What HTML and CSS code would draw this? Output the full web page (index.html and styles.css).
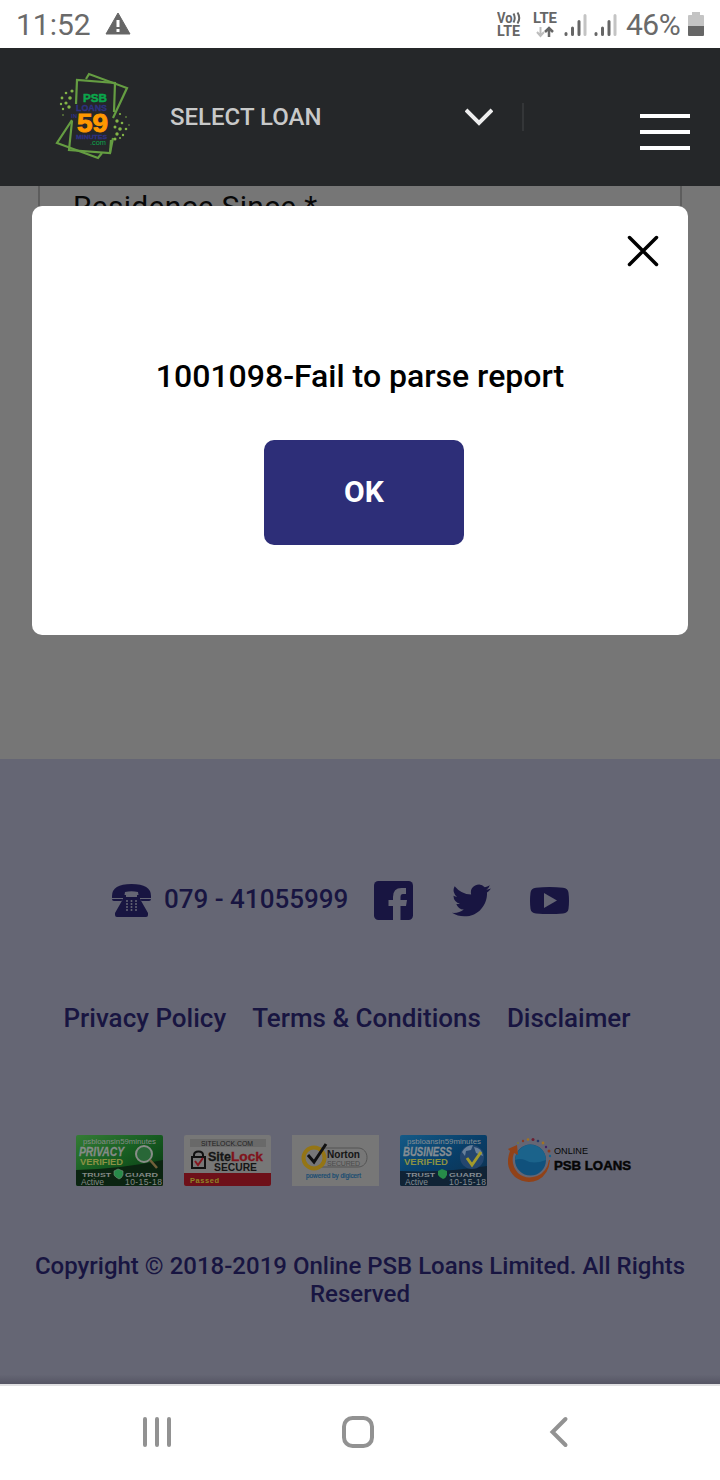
FILE: index.html
```html
<!DOCTYPE html>
<html lang="en">
<head>
<meta charset="utf-8">
<meta name="viewport" content="width=720">
<title>PSB Loans in 59 Minutes</title>
<link rel="stylesheet" href="styles.css">
</head>
<body>
<div class="status">
  <span class="time">11:52</span>
  <svg class="warn" width="26" height="23" viewBox="0 0 26 23"><path d="M13 1 25 22H1Z" fill="#666" stroke="#666" stroke-linejoin="round"/><path d="M13 8v7M13 17v3" stroke="#fff" stroke-width="3"/></svg>
  <svg class="signals" width="120" height="30" viewBox="0 0 120 30">
    <g fill="#666" font-family="Roboto, sans-serif" font-weight="700">
      <text x="0" y="13" font-size="14" textLength="15.500" lengthAdjust="spacingAndGlyphs">Vo</text>
      <text x="0" y="26" font-size="14" textLength="23" lengthAdjust="spacingAndGlyphs">LTE</text>
      <text x="36" y="13" font-size="14" textLength="24" lengthAdjust="spacingAndGlyphs">LTE</text>
    </g>
    <g fill="none" stroke="#666" stroke-width="2"><path d="M16.500 3.500q2.500 4.500 0 9M20.500 2.500q3.500 5.500 0 11"/><path d="M52 27V18M48 22l4-4 4 4" stroke-width="2.500"/><path d="M43.500 17v9M40 22l3.500 4 3.500-4" stroke="#bdbdbd" stroke-width="2"/></g>
    <g stroke-width="3" stroke-linecap="round" stroke="#666"><path d="M69 23.500v1M75.500 18v6.500M82 11.500v13M99 23.500v1M105.500 18v6.500M112 11.500v13"/><path d="M88 5.500v19M118 5.500v19" stroke="#c4c4c4"/></g>
  </svg>
  <span class="percent">46%</span>
  <svg class="battery" width="16" height="24" viewBox="0 0 16 24"><path d="M4 0h8v3h3q1 0 1 1v10H0V4q0-1 1-1h3Z" fill="#c4c4c4"/><path d="M0 14h16v9q0 1-1 1H1q-1 0-1-1Z" fill="#666"/></svg>
</div>

<header class="header">
  <svg class="logo" width="110" height="110" viewBox="0 0 110 110">
    <g fill="none" stroke="#659d42" stroke-width="2.200">
      <path d="M36 44 37 20 75 23 74 52M73 78 70 93 29 90 32 61"/>
      <path d="M71 80 70 93"/>
      <path d="m46 19 3-5 38 14-14 30M32 60 17 83l41 15 4-5"/>
    </g>
    <g fill="#83b547"><circle cx="32" cy="31" r="1.600"/><circle cx="26" cy="33" r="1.300"/><circle cx="30" cy="38" r="1.800"/><circle cx="22" cy="38" r="1.400"/><circle cx="26" cy="43" r="1.600"/><circle cx="21" cy="44" r="1.200"/><circle cx="29" cy="47" r="1.700"/><circle cx="23" cy="49" r="1.200"/><circle cx="23" cy="55" r=".8"/>
    <circle cx="80" cy="54" r="1.100"/><circle cx="86" cy="57" r=".8"/><circle cx="77" cy="61" r="1.700"/><circle cx="82" cy="63" r="1.300"/><circle cx="75" cy="67" r="1.500"/><circle cx="80" cy="69" r="1.800"/><circle cx="86" cy="69" r="1.300"/><circle cx="77" cy="74" r="1.700"/><circle cx="83" cy="75" r="1.200"/><circle cx="75" cy="79" r="1.500"/><circle cx="80" cy="78" r="1"/><circle cx="89" cy="65" r=".7"/></g>
    <g font-family="Liberation Sans, sans-serif" font-weight="700">
      <text x="43" y="42" font-size="11" fill="#0ba64b" stroke="#0ba64b" stroke-width=".5" textLength="24" lengthAdjust="spacingAndGlyphs">PSB</text>
      <text x="36" y="50.500" font-size="8.500" fill="#2e3181" stroke="#2e3181" stroke-width=".3" textLength="31" lengthAdjust="spacingAndGlyphs">LOANS</text>
      <text x="31" y="57.500" font-size="6" fill="#2e3181" textLength="6" lengthAdjust="spacingAndGlyphs">IN</text>
      <text x="37" y="72" font-size="25" fill="#ff9800" stroke="#ff9800" stroke-width=".9" textLength="31" lengthAdjust="spacingAndGlyphs">59</text>
      <text x="36" y="78.500" font-size="6" fill="#2e3181" stroke="#2e3181" stroke-width=".3" textLength="31" lengthAdjust="spacingAndGlyphs">MINUTES</text>
      <text x="50" y="85" font-size="8" font-weight="400" fill="#0ba64b" textLength="16" lengthAdjust="spacingAndGlyphs">.com</text>
    </g>
  </svg>
  <div class="select">
    <span>SELECT LOAN</span>
    <svg width="28" height="20" viewBox="0 0 28 20"><path d="m1 3 13 13L27 3" fill="none" stroke="#eee" stroke-width="4"/></svg>
  </div>
  <div class="burger"><i></i><i></i><i></i></div>
</header>

<main class="page"><div class="form-box"><span class="field-label">Residence Since *</span></div></main>

<footer class="footer">
  <div class="contact">
    <svg width="39" height="33" viewBox="0 0 39 33"><path fill="#181541" d="M0 12Q0 0 19.500 0T39 12v2H27l-1-6q-6.500-1.500-13 0l-1 6H0Z"/><path fill="#181541" d="M0 15h11q-.5 2-2 2H2q-2 0-2-2ZM28 15h11q0 2-2 2h-7q-1.500 0-2-2Z"/><path fill="#181541" d="M11 11h3v2h11v-2h3v4l8 14v2q0 2-2 2H5q-2 0-2-2v-2l8-14Z"/><g fill="#656674"><circle cx="15" cy="17" r="1"/><circle cx="19.500" cy="17" r="1"/><circle cx="24" cy="17" r="1"/><circle cx="15" cy="20" r="1"/><circle cx="19.500" cy="20" r="1"/><circle cx="24" cy="20" r="1"/><circle cx="15" cy="23" r="1"/><circle cx="19.500" cy="23" r="1"/><circle cx="24" cy="23" r="1"/><circle cx="15" cy="26" r="1"/><circle cx="19.500" cy="26" r="1"/><circle cx="24" cy="26" r="1"/></g></svg>
    <span class="phone">079 - 41055999</span>
    <svg class="facebook" width="39" height="39" viewBox="0 0 39 39"><rect width="39" height="39" rx="4.500" fill="#181541"/><path fill="#656674" d="M19 39V25h-4.500v-6H19v-3q0-9 8.500-9H32v6h-3q-2.500 0-2.500 3v3H33l-1 6h-5.500v14Z"/></svg>
    <svg class="twitter" width="39" height="39" viewBox="0 0 24 24"><path fill="#181541" d="M23.950 4.570a10 10 0 0 1-2.820.77 4.960 4.960 0 0 0 2.160-2.720 9.900 9.900 0 0 1-3.130 1.190 4.920 4.920 0 0 0-8.380 4.480A13.960 13.960 0 0 1 1.640 3.160a4.930 4.930 0 0 0 1.520 6.570 4.900 4.900 0 0 1-2.230-.61v.06a4.920 4.920 0 0 0 3.950 4.830 5 5 0 0 1-2.210.08 4.940 4.940 0 0 0 4.600 3.420A9.870 9.870 0 0 1 0 19.540a13.990 13.990 0 0 0 7.550 2.210c9.050 0 14-7.500 14-13.980 0-.21 0-.42-.02-.63a9.940 9.940 0 0 0 2.420-2.570Z"/></svg>
    <svg width="39" height="27" viewBox="0 0 39 27"><path fill="#181541" d="M6 .7q13.500-1.400 27 0 5 .3 5.500 5 1 8 0 16-.5 4.300-5.500 4.700-13.500 1.200-27 0-5-.4-5.500-4.700-1-8 0-16 .5-4.700 5.500-5Z"/><path d="m14 6 13 7.500L14 21Z" fill="#656674"/></svg>
  </div>
  <nav class="links"><a>Privacy Policy</a><a>Terms &amp; Conditions</a><a>Disclaimer</a></nav>
  <div class="seals">
    <svg width="87" height="52" viewBox="0 0 87 52">
      <defs><linearGradient id="green" x2="1" y2="1"><stop offset="0" stop-color="#347c35"/><stop offset=".45" stop-color="#175e22"/><stop offset="1" stop-color="#07310f"/></linearGradient><linearGradient id="blue" x2="1" y2="1"><stop stop-color="#145a87"/><stop offset=".5" stop-color="#083e68"/><stop offset="1" stop-color="#102f4b"/></linearGradient></defs>
      <rect width="87" height="51" rx="2" fill="url(#green)"/><path d="M0 35q45-1 87-10v24q0 2-2 2H2q-2 0-2-2Z" fill="#0b2411"/>
      <circle cx="68" cy="19" r="8" fill="#286737" stroke="#888d88" stroke-width="2"/><path d="m74 25 7 8" stroke="#71603a" stroke-width="2.500"/>
      <g fill="#858b87" font-family="Liberation Sans, sans-serif"><text x="7" y="9" font-size="8" textLength="73" lengthAdjust="spacingAndGlyphs">psbloansin59minutes</text><text x="3" y="20.500" font-size="13" font-weight="700" font-style="italic" stroke="#858b87" stroke-width=".3" textLength="45" lengthAdjust="spacingAndGlyphs">PRIVACY</text><text x="4" y="30" font-size="9" font-weight="700" fill="#8b9144" textLength="43" lengthAdjust="spacingAndGlyphs">VERIFIED</text><text x="6" y="41.500" font-size="6" font-weight="700" textLength="29" lengthAdjust="spacingAndGlyphs">TRUST</text><text x="49" y="41.500" font-size="6" font-weight="700" textLength="33" lengthAdjust="spacingAndGlyphs">GUARD</text><text x="5" y="49.500" font-size="8.500" textLength="23">Active</text><text x="49" y="49.500" font-size="8.500" textLength="37">10-15-18</text></g><path d="m38 36 4-2 5 2v4q-1 3-4 4-4-2-5-4Z" fill="#278b49" stroke="#768b79" stroke-width=".6"/>
    </svg>
    <svg width="87" height="52" viewBox="0 0 87 52"><rect width="87" height="51" rx="2" fill="#777"/><path d="M6 4h76v8H6Z" fill="#696969"/><path d="M0 38h87v11q0 2-2 2H2q-2 0-2-2Z" fill="#6e1019"/><path d="M10 22v-2q0-3.500 4.500-3.500T19 20v2" fill="none" stroke="#111" stroke-width="2"/><rect x="8" y="22" width="13" height="11" fill="#777" stroke="#111" stroke-width="2"/><path d="m11 26 3 4 5-7" fill="none" stroke="#86151e" stroke-width="2"/><g font-family="Liberation Sans, sans-serif" font-weight="700"><text x="17" y="10.500" font-size="7" font-weight="400" fill="#222" textLength="52" lengthAdjust="spacingAndGlyphs">SITELOCK.COM</text><text x="24" y="26" font-size="12" fill="#151515" stroke="#151515" stroke-width=".3" textLength="23" lengthAdjust="spacingAndGlyphs">Site</text><text x="47" y="26" font-size="12" fill="#80131c" stroke="#80131c" stroke-width=".3" textLength="32" lengthAdjust="spacingAndGlyphs">Lock</text><text x="30" y="36" font-size="10" fill="#151515" textLength="43" lengthAdjust="spacingAndGlyphs">SECURE</text><text x="6" y="48" font-size="7.500" fill="#8e8525" textLength="29">Passed</text></g></svg>
    <svg width="87" height="52" viewBox="0 0 87 52"><rect width="87" height="51" fill="#777"/><path d="M24 13h42c12 0 12 19 0 19H24" fill="none" stroke="#555"/><circle cx="22" cy="23" r="10.500" fill="#777" stroke="#947515" stroke-width="4"/><path d="m16 20 6 7L34 9" fill="none" stroke="#111" stroke-width="3"/><g font-family="Liberation Sans, sans-serif"><text x="35" y="23" font-size="10" font-weight="700" fill="#151515" textLength="33" lengthAdjust="spacingAndGlyphs">Norton</text><text x="35" y="31" font-size="7" fill="#4b4b4b" textLength="33">SECURED</text><text x="14" y="43" font-size="6.500" fill="#164b73" stroke="#164b73" stroke-width=".2" textLength="55" lengthAdjust="spacingAndGlyphs">powered by digicert</text></g></svg>
    <svg width="87" height="52" viewBox="0 0 87 52"><rect width="87" height="51" rx="2" fill="url(#blue)"/><path d="M0 36q45 2 87-5v18q0 2-2 2H2q-2 0-2-2Z" fill="#102335"/><circle cx="72" cy="22" r="12" fill="#24466e"/><path d="M62 17q4-7 11-7l-2 5-5 1-1 5ZM74 12q8 1 9 9l-7-3Z" fill="#68809a"/><path d="m67 23 5 7 9-13" fill="none" stroke="#a29a2b" stroke-width="3"/><g fill="#858d93" font-family="Liberation Sans, sans-serif"><text x="7" y="9" font-size="8" textLength="74" lengthAdjust="spacingAndGlyphs">psbloansin59minutes</text><text x="3" y="20.500" font-size="13" font-weight="700" font-style="italic" stroke="#858d93" stroke-width=".3" textLength="49" lengthAdjust="spacingAndGlyphs">BUSINESS</text><text x="4" y="30" font-size="9" font-weight="700" fill="#8b9144" textLength="44" lengthAdjust="spacingAndGlyphs">VERIFIED</text><text x="6" y="41.500" font-size="6" font-weight="700" textLength="29" lengthAdjust="spacingAndGlyphs">TRUST</text><text x="49" y="41.500" font-size="6" font-weight="700" textLength="33" lengthAdjust="spacingAndGlyphs">GUARD</text><text x="5" y="49.500" font-size="8.500" textLength="23">Active</text><text x="49" y="49.500" font-size="8.500" textLength="37">10-15-18</text></g><path d="m38 36 4-2 5 2v4q-1 3-4 4-4-2-5-4Z" fill="#278b49"/></svg>
    <svg width="124" height="52" viewBox="0 0 124 52"><circle cx="22.500" cy="25" r="15.500" fill="#10517c"/><path d="M7 25q2-14 15-15.500 15 1.500 16 15.500-13 5-21 0-5-2-10 0Z" fill="#1b638b"/><path d="M2 16q-6 16 5 26 11 8 23 3 11-6 12-20h-1q-2 12-12 16-11 4-19-3-8-9-4-20l4 2-1-10-9 4Z" fill="#914218"/><g fill="#8b3a20"><circle cx="15" cy="6" r="1.200"/><circle cx="20" cy="4.500" r="1.300" fill="#a27321"/><circle cx="25" cy="4.500" r="1.500" fill="#6c1f31"/><circle cx="30" cy="6" r="1.300" fill="#23396b"/><circle cx="35" cy="8" r="1.400" fill="#a27321"/><circle cx="38" cy="12" r="1.200" fill="#452365"/><circle cx="41" cy="16" r="1.500"/><circle cx="42" cy="21" r="1.200" fill="#17658e"/><circle cx="10" cy="8" r="1" fill="#7a7a34"/></g><g fill="#060606" font-family="Liberation Sans, sans-serif"><text x="46" y="19" font-size="9" textLength="34" lengthAdjust="spacingAndGlyphs">ONLINE</text><text x="46" y="35" font-size="13" font-weight="700" stroke="#060606" stroke-width=".5" textLength="77" lengthAdjust="spacingAndGlyphs">PSB LOANS</text></g></svg>
  </div>
  <p class="copyright">Copyright © 2018-2019 Online PSB Loans Limited. All Rights<br>Reserved</p>
</footer>

<div class="navbar">
  <svg width="30" height="32" viewBox="0 0 30 32"><path d="M3 3v26M15 3v26M27 3v26" stroke="#929292" stroke-width="4" stroke-linecap="round"/></svg>
  <svg class="home" width="34" height="34" viewBox="0 0 34 34"><rect x="3" y="3" width="28" height="28" rx="8.500" fill="none" stroke="#929292" stroke-width="4"/></svg>
  <svg class="back" width="20" height="32" viewBox="0 0 20 32"><path d="M16.500 3 3.500 16l13 13" fill="none" stroke="#929292" stroke-width="4" stroke-linecap="round"/></svg>
</div>

<div class="modal" role="dialog">
  <svg class="close" width="32" height="32" viewBox="0 0 32 32"><path d="m2.500 2.500 27 27M29.500 2.500l-27 27" stroke="#000" stroke-width="3.500" stroke-linecap="round"/></svg>
  <p class="message">1001098-Fail to parse report</p>
  <button class="ok">OK</button>
</div>
</body>
</html>
```
FILE: styles.css
```css
* { box-sizing: border-box; }
body { margin: 0; width: 720px; height: 1480px; position: relative; overflow: hidden; font-family: Roboto, sans-serif; background: #767676; }
svg { display: block; flex: none; }
p { margin: 0; }

.status { height: 48px; background: #fff; color: #6a6a6a; display: flex; align-items: flex-start; padding: 0 16px; }
.time { font-size: 30px; line-height: 50px; width: 75px; white-space: nowrap; font-weight: 400; }
.warn { margin: 12px 0 0 14px; }
.signals { margin: 10px 0 0 366px; }
.percent { font-size: 30px; line-height: 50px; width: 56px; margin-left: 9px; letter-spacing: -.5px; white-space: nowrap; }
.battery { margin: 12px 0 0 6px; }

.header { height: 138px; background: #252729; display: flex; align-items: flex-start; padding-right: 30px; }
.logo { margin: 12px 0 0 40px; }
.select { width: 354px; height: 28px; margin: 55px 0 0 20px; padding-right: 29px; border-right: 2px solid #343638; display: flex; align-items: center; justify-content: space-between; color: #c8c9c9; font-size: 24px; font-weight: 500; }
.burger { margin: 66px 0 0 auto; width: 50px; display: grid; gap: 12px; }
.burger i { height: 4px; background: #fff; }

.page { height: 573px; background: #767676; padding: 0 38px; }
.form-box { height: 300px; border: solid #5d5d5d; border-width: 0 2px; padding: 3px 33px; }
.field-label { font-size: 30px; line-height: 36px; color: #080808; letter-spacing: .3px; }

.footer { height: 625px; background: linear-gradient(transparent 98.500%, #555564), #656674; color: #181541; font-weight: 500; }
.contact { display: flex; align-items: center; padding: 122px 0 0 112px; height: 161px; }
.phone { width: 184px; margin: 0 0 4px 13px; font-size: 26px; white-space: nowrap; }
.facebook { margin-left: 26px; }
.twitter { margin: 0 39px; }
.links { display: flex; gap: 26px; padding: 83px 0 0 63.500px; font-size: 26px; line-height: 30px; white-space: nowrap; }
.seals { display: flex; gap: 21px; padding: 102px 0 0 76px; }
.copyright { margin-top: 65px; font-size: 24px; line-height: 28px; text-align: center; white-space: nowrap; }

.navbar { height: 96px; background: #fff; border-top: 2px solid #e0e0e2; display: flex; align-items: center; padding: 0 0 2px 142px; }
.home { margin-left: 169px; }
.back { margin-left: 174px; }

.modal { position: absolute; left: 32px; top: 206px; width: 656px; height: 429px; border-radius: 10px; background: #fff; display: flex; flex-direction: column; align-items: center; }
.close { align-self: flex-end; margin: 29px 29px 0 0; }
.message { margin-top: 90px; font-size: 32px; line-height: 38px; font-weight: 500; white-space: nowrap; color: #000; }
.ok { width: 200px; height: 105px; margin: 45px 0 0 8px; padding: 0 0 2px; border: 0; border-radius: 10px; background: #2d2e78; color: #fff; font: 700 30px Roboto, sans-serif; }
```
